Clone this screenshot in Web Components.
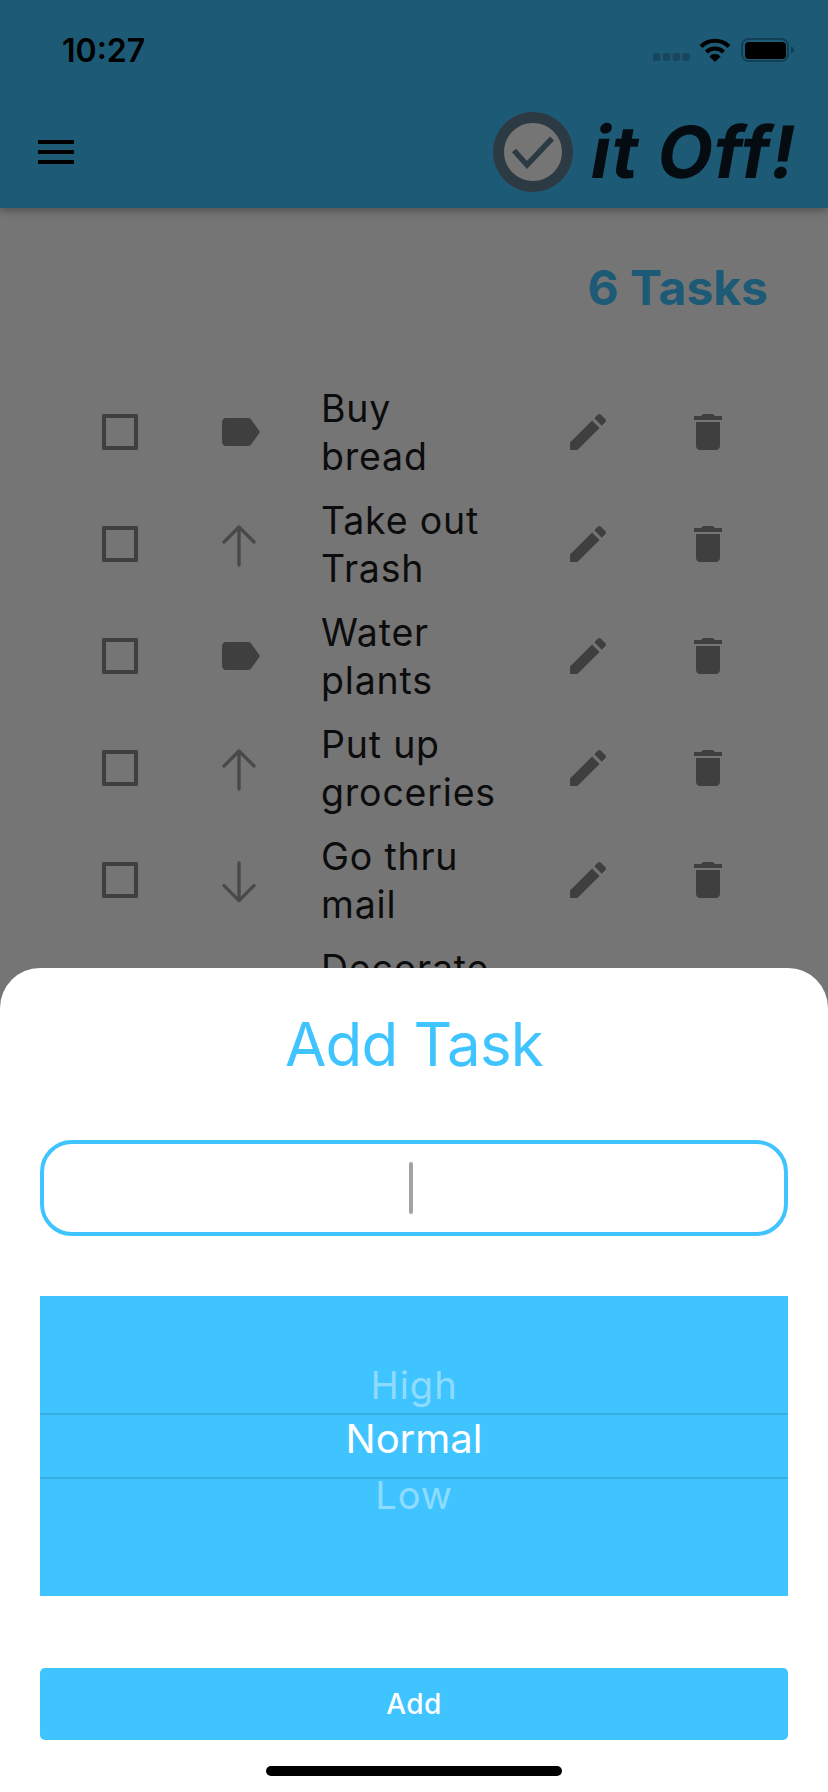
<!DOCTYPE html>
<html>
<head>
<meta charset="utf-8">
<title>Knock it Off!</title>
<style>
  html, body { margin: 0; padding: 0; overflow: hidden; background: #fff; }
</style>
</head>
<body>
<todo-app>
  <status-bar slot="top" time="10:27"></status-bar>
  <app-bar slot="top"></app-bar>
  <task-count>6 Tasks</task-count>
  <task-row icon="label">Buy<br>bread</task-row>
  <task-row icon="up">Take out<br>Trash</task-row>
  <task-row icon="label">Water<br>plants</task-row>
  <task-row icon="up">Put up<br>groceries</task-row>
  <task-row icon="down">Go thru<br>mail</task-row>
  <task-row icon="label">Decorate</task-row>
  <add-task-sheet slot="sheet">
    <priority-picker></priority-picker>
  </add-task-sheet>
</todo-app>

<script>
const FONT = '"Inter", "Liberation Sans", sans-serif';

const ICONS = {
  menu: '<path d="M3 18h18v-2H3v2zm0-5h18v-2H3v2zm0-7v2h18V6H3z"/>',
  box: '<path fill-rule="evenodd" d="M3.500 3h17c.3 0 .5.2.5.5v17c0 .3-.2.5-.5.5h-17c-.3 0-.5-.2-.5-.5v-17c0-.3.2-.5.5-.5zM5 5v14h14V5z"/>',
  label: '<path d="M17.63 5.84C17.27 5.33 16.67 5 16 5L5 5.01C3.9 5.01 3 5.9 3 7v10c0 1.1.9 1.99 2 1.99L16 19c.67 0 1.27-.33 1.63-.84L22 12l-4.37-6.16z"/>',
  up: '<path d="M11.500 3.500v19M4 11l7.500-7.500L19 11" fill="none" stroke="currentColor" stroke-width="1.7" stroke-linecap="round" stroke-linejoin="round"/>',
  down: '<path d="M11.500 3.500v18.800M4 14.800l7.500 7.500 7.500-7.500" fill="none" stroke="currentColor" stroke-width="1.7" stroke-linecap="round" stroke-linejoin="round"/>',
  edit: '<path d="M3 17.25V21h3.75L17.81 9.94l-3.75-3.75L3 17.25zM20.71 7.04c.39-.39.39-1.02 0-1.41l-2.34-2.34c-.39-.39-1.02-.39-1.41 0l-1.83 1.83 3.75 3.75 1.83-1.83z"/>',
  trash: '<path d="M6 19c0 1.1.9 2 2 2h8c1.1 0 2-.9 2-2V7H6v12zM19 4h-3.5l-1-1h-5l-1 1H5v2h14V4z"/>'
};

function icon(name) {
  return `<svg width="48" height="48" viewBox="0 0 24 24" fill="currentColor">${ICONS[name]}</svg>`;
}

class TodoApp extends HTMLElement {
  connectedCallback() {
    this.attachShadow({ mode: 'open' });
    this.shadowRoot.innerHTML = `
      <style>
        :host { display: block; position: relative; width: 828px; height: 1792px; overflow: hidden; background: #fff; font-family: ${FONT}; }
        .top { background: #40C4FF; box-shadow: 0 3px 8px rgba(0, 0, 0, 0.3); position: relative; }
        .barrier { position: absolute; inset: 0; background: rgba(0, 0, 0, 0.54); }
        .sheet { position: absolute; left: 0; right: 0; bottom: 0; }
      </style>
      <div class="top"><slot name="top"></slot></div>
      <main><slot></slot></main>
      <div class="barrier"></div>
      <div class="sheet"><slot name="sheet"></slot></div>
    `;
  }
}

class StatusBar extends HTMLElement {
  connectedCallback() {
    this.attachShadow({ mode: 'open' });
    this.shadowRoot.innerHTML = `
      <style>
        :host { display: flex; align-items: center; justify-content: space-between; box-sizing: border-box; height: 88px; padding: 30px 34px 18px 62px; color: #000; }
        .time { font-size: 32px; font-weight: 600; line-height: 40px; margin-top: 2px; }
        .icons { display: flex; align-items: center; }
        .dots { margin: 14px 9px 0 0; }
        .wifi { margin-right: 10px; }
        svg { display: block; }
      </style>
      <span class="time">${this.getAttribute('time')}</span>
      <div class="icons">
        <svg class="dots" width="37" height="8" viewBox="0 0 37 8" fill="#329acc">
          <rect width="7.5" height="8" rx="2"/><rect x="9.8" width="7.5" height="8" rx="2"/><rect x="19.6" width="7.5" height="8" rx="2"/><rect x="29.4" width="7.5" height="8" rx="2"/>
        </svg>
        <svg class="wifi" width="32" height="24" viewBox="0 0 32 24">
          <path d="M2 8.5A20 20 0 0 1 30 8.5M7.4 14A12.5 12.5 0 0 1 24.6 14" fill="none" stroke="#000" stroke-width="4"/>
          <path d="M16 24l-5.6-5.6A8 8 0 0 1 21.6 18.4z" fill="#000"/>
        </svg>
        <svg width="53" height="24" viewBox="0 0 53 24">
          <rect x="1" y="1" width="46" height="22" rx="6.5" fill="none" stroke="#2789b9" stroke-width="2"/>
          <rect x="4" y="4" width="41" height="17" rx="4" fill="#000"/>
          <path d="M50 8.500c1.800.5 3 1.900 3 3.500s-1.200 3-3 3.500z" fill="#2789b9"/>
        </svg>
      </div>
    `;
  }
}

class AppBar extends HTMLElement {
  connectedCallback() {
    this.attachShadow({ mode: 'open' });
    this.shadowRoot.innerHTML = `
      <style>
        :host { display: flex; align-items: center; justify-content: space-between; box-sizing: border-box; height: 120px; padding: 8px 31px 0 32px; }
        .menu { color: #000; height: 48px; }
        .brand { display: flex; align-items: center; gap: 19px; }
        .logo { display: block; }
        .name { display: inline-block; transform: skewX(-10deg); font-size: 72px; line-height: 80px; font-weight: 700; letter-spacing: 1.2px; color: #091c27; white-space: nowrap; }
      </style>
      <div class="menu">${icon('menu')}</div>
      <div class="brand">
        <svg class="logo" width="80" height="80" viewBox="0 0 80 80">
          <circle cx="40" cy="40" r="34.5" fill="#fff" stroke="#607e94" stroke-width="11"/>
          <path d="M21 38.500 34 53 59 26.500" fill="none" stroke="#607e94" stroke-width="5.500"/>
        </svg>
        <span class="name">it Off!</span>
      </div>
    `;
  }
}

class TaskCount extends HTMLElement {
  connectedCallback() {
    this.attachShadow({ mode: 'open' });
    this.shadowRoot.innerHTML = `
      <style>
        :host { display: block; box-sizing: border-box; height: 168px; padding: 50px 60px 0 0; text-align: right; font-size: 48px; line-height: 60px; font-weight: 700; color: #40C4FF; }
      </style>
      <slot></slot>
    `;
  }
}

class TaskRow extends HTMLElement {
  connectedCallback() {
    this.attachShadow({ mode: 'open' });
    const kind = this.getAttribute('icon');
    this.shadowRoot.innerHTML = `
      <style>
        :host { display: grid; grid-template-columns: 120px 105px 243px 120px 48px; align-items: center; height: 112px; padding-left: 96px; color: #8a8a8a; }
        .cell { height: 48px; }
        .thin { color: #a0a0a0; }
        .text { height: 96px; margin-top: 2px; font-size: 37.5px; line-height: 48px; font-weight: 400; letter-spacing: 0.8px; color: #1c1c1c; white-space: nowrap; }
        svg { display: block; }
      </style>
      <div class="cell">${icon('box')}</div>
      <div class="cell ${kind === 'label' ? '' : 'thin'}">${icon(kind)}</div>
      <div class="text"><slot></slot></div>
      <div class="cell">${icon('edit')}</div>
      <div class="cell">${icon('trash')}</div>
    `;
  }
}

class AddTaskSheet extends HTMLElement {
  connectedCallback() {
    this.attachShadow({ mode: 'open' });
    this.shadowRoot.innerHTML = `
      <style>
        :host { display: flex; flex-direction: column; box-sizing: border-box; height: 824px; padding: 40px 40px 0; background: #fff; border-radius: 40px 40px 0 0; }
        h2 { margin: 0 0 60px; font-size: 60px; line-height: 72px; font-weight: 400; letter-spacing: -0.8px; text-align: center; color: #40C4FF; }
        .field { box-sizing: border-box; display: flex; align-items: center; justify-content: center; height: 96px; margin-bottom: 60px; border: 4px solid #40C4FF; border-radius: 32px; }
        .caret { width: 4px; height: 52px; margin-right: 6px; border-radius: 2px; background: #a3a3a3; }
        .add { box-sizing: border-box; height: 72px; margin-top: 72px; border-radius: 5px; background: #40C4FF; color: #fff; font-size: 28px; font-weight: 500; letter-spacing: 0.4px; line-height: 72px; text-align: center; }
        .home { align-self: center; width: 296px; height: 10px; margin-top: 26px; border-radius: 5px; background: #000; }
      </style>
      <h2>Add Task</h2>
      <div class="field"><div class="caret"></div></div>
      <slot></slot>
      <div class="add">Add</div>
      <div class="home"></div>
    `;
  }
}

class PriorityPicker extends HTMLElement {
  connectedCallback() {
    this.attachShadow({ mode: 'open' });
    this.shadowRoot.innerHTML = `
      <style>
        :host { display: block; box-sizing: border-box; height: 300px; padding-top: 69px; background: #40C4FF; text-align: center; color: #fff; }
        .side { font-size: 38px; font-weight: 400; letter-spacing: 1px; color: rgba(255, 255, 255, 0.42); }
        .high { line-height: 40px; margin-bottom: 8px; }
        .low { line-height: 32px; }
        .selected { box-sizing: border-box; height: 66px; border-top: 2px solid #38ade0; border-bottom: 2px solid #38ade0; font-size: 40px; line-height: 48px; }
      </style>
      <div class="side high">High</div>
      <div class="selected">Normal</div>
      <div class="side low">Low</div>
    `;
  }
}

customElements.define('todo-app', TodoApp);
customElements.define('status-bar', StatusBar);
customElements.define('app-bar', AppBar);
customElements.define('task-count', TaskCount);
customElements.define('task-row', TaskRow);
customElements.define('add-task-sheet', AddTaskSheet);
customElements.define('priority-picker', PriorityPicker);
</script>
</body>
</html>
